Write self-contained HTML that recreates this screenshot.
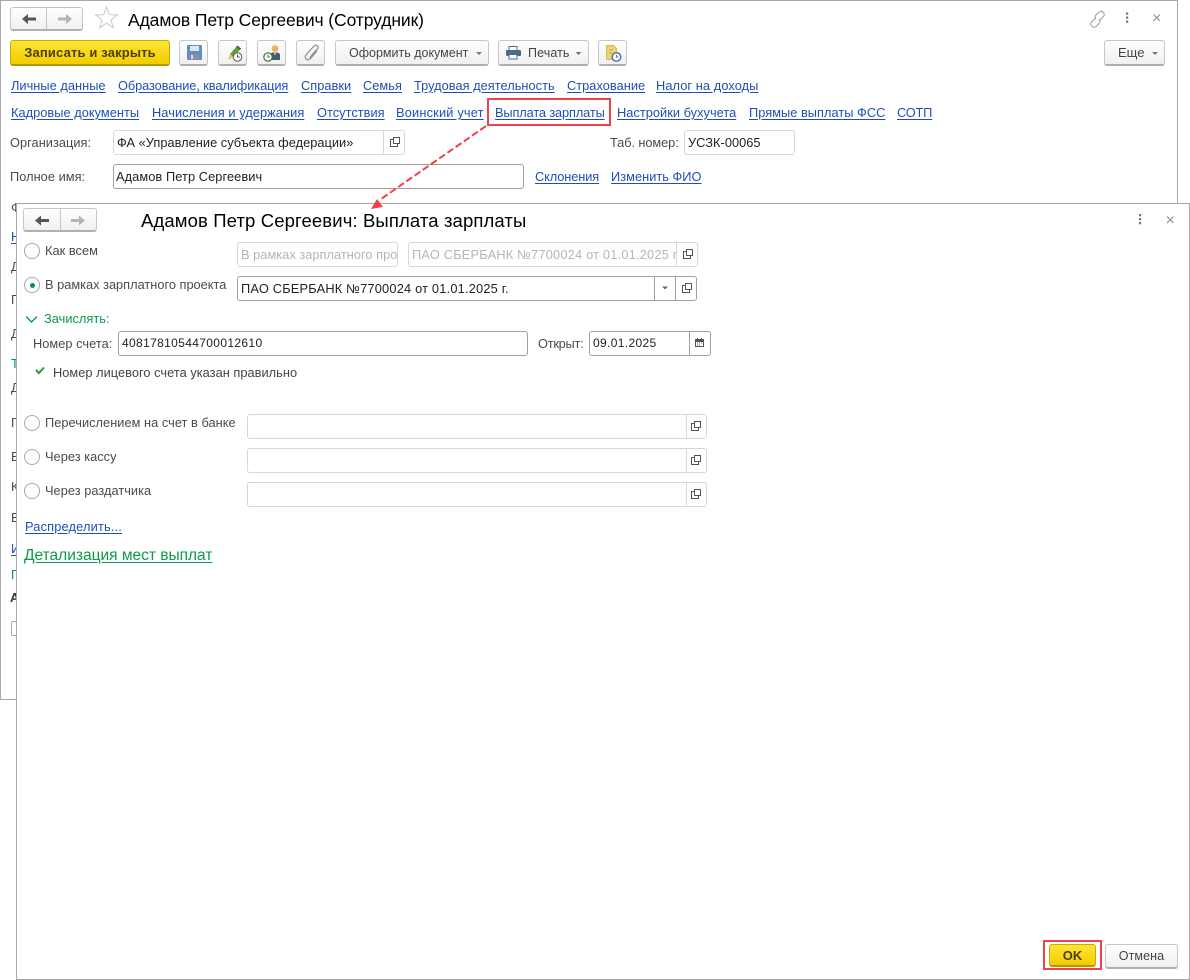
<!DOCTYPE html>
<html lang="ru"><head><meta charset="utf-8"><title>Адамов Петр Сергеевич</title>
<style>
html,body{margin:0;padding:0;background:#fff}
#r{position:relative;width:1190px;height:980px;overflow:hidden;background:#fff;font-family:"Liberation Sans",Arial,sans-serif;font-size:12.8px;color:#4b4b4b}
#r *{box-sizing:border-box}
.a,.l,.t,.f,.b,.rd,.i{position:absolute}
.t,.l{white-space:nowrap;line-height:14px;letter-spacing:.03px}
.l{color:#1f4fb5;text-decoration:underline;text-underline-offset:2px}
.f{border:1px solid #a0a0a0;border-radius:3px;background:#fff;color:#222;line-height:20px;padding-left:3px;white-space:nowrap;overflow:hidden;letter-spacing:.03px}
.f.g{border-color:#d8d8d8}
.b{border:1px solid #c6c6c6;border-bottom:2px solid #b0b0b0;border-radius:3px;background:linear-gradient(#fff,#f0f0f0);text-align:center;color:#444;line-height:22px;white-space:nowrap}
.y{background:linear-gradient(#fde535,#f3cc00);border:1px solid #c9ab00;border-bottom:2px solid #b59b00;color:#4a3f00;font-weight:bold}
.rd{width:16px;height:16px;border:1px solid #a8a8a8;border-radius:50%;background:#fff}
.s{position:absolute;top:0;bottom:0;width:1px;background:#c6c6c6}
.red{position:absolute;border:2px solid #f5404a}
svg{position:absolute;overflow:visible}
</style></head><body><div id="r">

<!-- outer window -->
<div class="a" style="left:0;top:0;width:1178px;height:700px;border:1px solid #a8a8a8"></div>

<div class="b" style="left:10px;top:7px;width:73px;height:24px"><div class="s" style="left:35px"></div></div>
<svg style="left:0;top:0" width="130" height="32">
<path d="M22 19l6-5v3.500h8v3h-8v3.500z" fill="#555"/>
<path d="M72 19l-6-5v3.500h-8v3h8v3.500z" fill="#b4b4b4"/>
<path d="M106.500 7l2.800 7.700 8.100.3-6.400 5 2.300 7.800-6.800-4.600-6.800 4.600 2.300-7.800-6.400-5 8.100-.3z" fill="#fff" stroke="#c8c8c8"/>
</svg>
<div class="t" style="left:128px;top:9px;font-size:17.500px;line-height:22px;color:#000;letter-spacing:-.1px">Адамов Петр Сергеевич (Сотрудник)</div>

<svg style="left:1085px;top:8px" width="100" height="22">
<path d="M10 10.500l-3.500 3.500a3.200 3.200 0 0 0 4.500 4.500l3-3a3.200 3.200 0 0 0 0-4.500M11 11.500a3.200 3.200 0 0 1 0-4.500l3-3a3.200 3.200 0 0 1 4.500 4.500l-3.500 3.500" fill="none" stroke="#a0a0a0" stroke-width="1.100"/>
<path d="M41 4.500h2.200v2.200h-2.200zM41 8.500h2.200v2.200h-2.200zM41 12.500h2.200v2.200h-2.200z" fill="#777"/>
<path d="M68.500 6.500l6.500 6.500M75 6.500l-6.500 6.500" stroke="#888" stroke-width="1"/></svg>

<div class="b y" style="left:10px;top:40px;width:160px;height:26px;font-size:13px;line-height:24px;letter-spacing:.15px">Записать и закрыть</div>
<div class="b" style="left:179px;top:40px;width:29px;height:26px"></div>
<div class="b" style="left:218px;top:40px;width:29px;height:26px"></div>
<div class="b" style="left:257px;top:40px;width:29px;height:26px"></div>
<div class="b" style="left:296px;top:40px;width:29px;height:26px"></div>
<div class="b" style="left:335px;top:40px;width:154px;height:26px;line-height:24px;text-align:left;padding-left:13px;font-size:12.500px">Оформить документ</div>
<div class="b" style="left:498px;top:40px;width:91px;height:26px;line-height:24px;text-align:left;padding-left:29px;font-size:12.500px;letter-spacing:.1px">Печать</div>
<div class="b" style="left:598px;top:40px;width:29px;height:26px"></div>
<div class="b" style="left:1104px;top:40px;width:61px;height:26px;line-height:24px;text-align:left;padding-left:13px;font-size:13px">Еще</div>
<svg style="left:0;top:0" width="1190" height="70">
<path d="M476 52h6l-3 3zM575.500 52h6l-3 3zM1152 52h6l-3 3z" fill="#777"/>
<!-- save -->
<rect x="187" y="45" width="15" height="15" rx="1" fill="#5f92c4"/><rect x="190" y="46" width="9" height="5" fill="#dbe8f3"/><rect x="190" y="54" width="9" height="6" fill="#8a8f96"/><rect x="191" y="55" width="2" height="4" fill="#dde"/>
<!-- pen + clock -->
<path d="M230 54l7-8 3.500 3-7 8z" fill="#5aa33c"/><path d="M236 47l1.500-1.500 3.500 3-1 1.500z" fill="#3a6d2b"/><path d="M230 54l3.500 3-5.500 3z" fill="#e6c16c"/><circle cx="237.500" cy="57" r="4.300" fill="#fff" stroke="#555"/><path d="M237.500 54.500V57h2.200" fill="none" stroke="#555"/>
<!-- person + clock -->
<circle cx="275" cy="48.500" r="3.300" fill="#eab35c"/><path d="M270 60v-5c0-2 2.500-2.800 5-2.800s5 .8 5 2.800v5z" fill="#4a5a6c"/><path d="M274 52.500h2l-1 3z" fill="#fff"/><circle cx="268" cy="57" r="4.200" fill="#fff" stroke="#3b7a3b" stroke-width="1.200"/><path d="M268 54.500V57h2" fill="none" stroke="#3b7a3b"/>
<!-- clip -->
<path d="M309.500 58l8-9c2-2.500-1.500-5-3.500-3l-8 9c-2.500 3 1.500 6.500 4 4l7-8M311.500 55.500l5-6" fill="none" stroke="#8d8d8d" stroke-width="1.200"/>
<!-- printer -->
<rect x="509" y="46.500" width="8" height="4" fill="#fff" stroke="#4a6d8f"/><rect x="506" y="50" width="15" height="6" rx="1" fill="#4a6d8f"/><rect x="509" y="54.500" width="8" height="4.500" fill="#fff" stroke="#4a6d8f"/>
<!-- doc+clock -->
<path d="M606.500 45.500h7l3 3v11h-10z" fill="#f0d27a" stroke="#dcb850"/><path d="M609 50h4M609 53h3" stroke="#c9a440"/><circle cx="616.500" cy="57" r="4.300" fill="#fff" stroke="#3f7cc0" stroke-width="1.500"/><path d="M616.500 55v2h2" fill="none" stroke="#d5503c"/>
</svg>

<a class="l" style="left:11px;top:79px">Личные данные</a>
<a class="l" style="left:118px;top:79px;letter-spacing:-.09px">Образование, квалификация</a>
<a class="l" style="left:301px;top:79px">Справки</a>
<a class="l" style="left:363px;top:79px">Семья</a>
<a class="l" style="left:414px;top:79px">Трудовая деятельность</a>
<a class="l" style="left:567px;top:79px">Страхование</a>
<a class="l" style="left:656px;top:79px;letter-spacing:.08px">Налог на доходы</a>

<a class="l" style="left:11px;top:106px">Кадровые документы</a>
<a class="l" style="left:152px;top:106px;letter-spacing:.07px">Начисления и удержания</a>
<a class="l" style="left:317px;top:106px">Отсутствия</a>
<a class="l" style="left:396px;top:106px;letter-spacing:.18px">Воинский учет</a>
<a class="l" style="left:495px;top:106px;letter-spacing:-.13px">Выплата зарплаты</a>
<a class="l" style="left:617px;top:106px">Настройки бухучета</a>
<a class="l" style="left:749px;top:106px">Прямые выплаты ФСС</a>
<a class="l" style="left:897px;top:106px;letter-spacing:-.2px">СОТП</a>
<div class="red" style="left:487px;top:98px;width:124px;height:28px"></div>

<div class="t" style="left:10px;top:136px">Организация:</div>
<div class="f g" style="left:113px;top:130px;width:292px;height:25px;line-height:23px">ФА «Управление субъекта федерации»<div class="s" style="left:269px;background:#d8d8d8"></div></div>
<div class="t" style="left:610px;top:136px;letter-spacing:-.08px">Таб. номер:</div>
<div class="f g" style="left:684px;top:130px;width:111px;height:25px;line-height:23px">УСЗК-00065</div>
<div class="t" style="left:10px;top:170px">Полное имя:</div>
<div class="f" style="left:113px;top:164px;width:411px;height:25px;line-height:23px;padding-left:2px;letter-spacing:.08px">Адамов Петр Сергеевич</div>
<a class="l" style="left:535px;top:170px;letter-spacing:-.1px">Склонения</a>
<a class="l" style="left:611px;top:170px">Изменить ФИО</a>

<!-- clipped left strip of outer form -->
<div class="t" style="left:11px;top:201px">Ф</div>
<a class="l" style="left:11px;top:230px">Н</a>
<div class="t" style="left:11px;top:260px">Д</div>
<div class="t" style="left:11px;top:293px">П</div>
<div class="t" style="left:11px;top:327px">Д</div>
<div class="t" style="left:11px;top:357px;color:#0a9a4a">Т</div>
<div class="t" style="left:11px;top:381px">Д</div>
<div class="t" style="left:11px;top:416px">П</div>
<div class="t" style="left:11px;top:450px">В</div>
<div class="t" style="left:11px;top:480px">К</div>
<div class="t" style="left:11px;top:511px">В</div>
<a class="l" style="left:11px;top:542px">И</a>
<div class="t" style="left:11px;top:568px;color:#0a9a4a">Г</div>
<div class="t" style="left:10px;top:591px;font-weight:bold;color:#333">А</div>
<div class="a" style="left:11px;top:621px;width:12px;height:15px;border:1px solid #a8a8a8;border-radius:2px"></div>

<!-- dialog -->
<div class="a" style="left:16px;top:203px;width:1174px;height:777px;background:#fff;border:1px solid #a8a8a8"></div>
<div class="b" style="left:23px;top:208px;width:74px;height:24px"><div class="s" style="left:36px"></div></div>
<svg style="left:0;top:200px" width="130" height="40">
<path d="M35 20.500l6-5v3.500h8v3h-8v3.500z" fill="#555"/>
<path d="M85 20.500l-6-5v3.500h-8v3h8v3.500z" fill="#b4b4b4"/></svg>
<div class="t" style="left:141px;top:210px;font-size:18.500px;line-height:22px;color:#000;letter-spacing:.12px">Адамов Петр Сергеевич: Выплата зарплаты</div>
<svg style="left:1130px;top:210px" width="50" height="20"><path d="M9 4h2.200v2.200h-2.200zM9 8h2.200v2.200h-2.200zM9 12h2.200v2.200h-2.200z" fill="#777"/><path d="M37 6.500l6.500 6.500M43.500 6.500l-6.500 6.500" stroke="#888" stroke-width="1"/></svg>

<div class="rd" style="left:24px;top:243px"></div>
<div class="t" style="left:45px;top:244px">Как всем</div>
<div class="f g" style="left:237px;top:242px;width:161px;height:25px;line-height:23px;color:#b5b5b5">В рамках зарплатного проекта</div>
<div class="f g" style="left:408px;top:242px;width:290px;height:25px;line-height:23px;color:#b5b5b5;letter-spacing:.2px"><span style="display:block;width:265px;overflow:hidden">ПАО СБЕРБАНК №7700024 от 01.01.2025 г.</span><div class="s" style="left:267px;background:#d8d8d8"></div></div>

<div class="rd" style="left:24px;top:277px"></div>
<div class="a" style="left:29px;top:282px;width:5px;height:5px;border-radius:50%;background:#0a8f4a;margin:.5px"></div>
<div class="t" style="left:45px;top:278px;letter-spacing:0">В рамках зарплатного проекта</div>
<div class="f" style="left:237px;top:276px;width:460px;height:25px;line-height:23px;letter-spacing:.2px">ПАО СБЕРБАНК №7700024 от 01.01.2025 г.<div class="s" style="left:416px;background:#a0a0a0"></div><div class="s" style="left:437px;background:#a0a0a0"></div></div>

<svg style="left:0;top:300px" width="60" height="90"><path d="M26 16.500l5.500 5.500 5.500-5.500" fill="none" stroke="#0a9a4a" stroke-width="1.400"/><path d="M36 70l3 3 5-5.500" fill="none" stroke="#2e9a2e" stroke-width="2"/></svg>
<div class="t" style="left:44px;top:312px;color:#0a9a4a">Зачислять:</div>
<div class="t" style="left:33px;top:337px">Номер счета:</div>
<div class="f" style="left:118px;top:331px;width:410px;height:25px;line-height:23px;font-size:12px;letter-spacing:.35px">40817810544700012610</div>
<div class="t" style="left:538px;top:337px;letter-spacing:-.25px">Открыт:</div>
<div class="f" style="left:589px;top:331px;width:122px;height:25px;line-height:23px;font-size:12px;letter-spacing:.35px">09.01.2025<div class="s" style="left:99px;background:#a0a0a0"></div></div>
<div class="t" style="left:53px;top:366px;color:#444">Номер лицевого счета указан правильно</div>

<div class="rd" style="left:24px;top:415px"></div>
<div class="t" style="left:45px;top:416px">Перечислением на счет в банке</div>
<div class="f g" style="left:247px;top:414px;width:460px;height:25px"><div class="s" style="left:438px;background:#d8d8d8"></div></div>
<div class="rd" style="left:24px;top:449px"></div>
<div class="t" style="left:45px;top:450px">Через кассу</div>
<div class="f g" style="left:247px;top:448px;width:460px;height:25px"><div class="s" style="left:438px;background:#d8d8d8"></div></div>
<div class="rd" style="left:24px;top:483px"></div>
<div class="t" style="left:45px;top:484px">Через раздатчика</div>
<div class="f g" style="left:247px;top:482px;width:460px;height:25px"><div class="s" style="left:438px;background:#d8d8d8"></div></div>

<a class="l" style="left:25px;top:520px;letter-spacing:.17px">Распределить...</a>
<a class="l" style="left:24px;top:547px;font-size:15.500px;line-height:18px;color:#0a9a4a;letter-spacing:0">Детализация мест выплат</a>

<!-- small open / dropdown / calendar icons -->
<svg style="left:0;top:0" width="1190" height="520" fill="none" stroke="#555" stroke-width="1">
<path d="M390.500 139.500h3v-2h6v6h-2v3h-7zM393.500 139.500v4h4"/>
<path d="M683.500 251.500h3v-2h6v6h-2v3h-7zM686.500 251.500v4h4"/>
<path d="M682.500 285.500h3v-2h6v6h-2v3h-7zM685.500 285.500v4h4"/>
<path d="M691.500 423.500h3v-2h6v6h-2v3h-7zM694.500 423.500v4h4"/>
<path d="M691.500 457.500h3v-2h6v6h-2v3h-7zM694.500 457.500v4h4"/>
<path d="M691.500 491.500h3v-2h6v6h-2v3h-7zM694.500 491.500v4h4"/>
<path d="M662 286.500h6l-3 3z" fill="#666" stroke="none"/>
<rect x="695" y="339" width="9" height="8" fill="#555" stroke="none"/><rect x="696" y="342" width="7" height="4" fill="#fff" stroke="none"/><path d="M697.500 338v2M701.500 338v2" stroke-width="1"/><path d="M697 343h1M699 343h1M701 343h1M697 345h1M699 345h1" stroke="#555"/>
</svg>

<!-- red arrow -->
<svg style="left:0;top:0" width="1190" height="300"><path d="M486 126L381 199" stroke="#f5404a" stroke-width="2" stroke-dasharray="7 3" fill="none"/><path d="M371 209l6-10 6 8z" fill="#f5404a"/></svg>

<!-- footer buttons -->
<div class="b y" style="left:1049px;top:944px;width:47px;height:23px;font-size:13px;line-height:21px">OK</div>
<div class="red" style="left:1043px;top:940px;width:59px;height:30px"></div>
<div class="b" style="left:1105px;top:944px;width:73px;height:25px;font-size:12.500px;letter-spacing:.1px">Отмена</div>

</div></body></html>
